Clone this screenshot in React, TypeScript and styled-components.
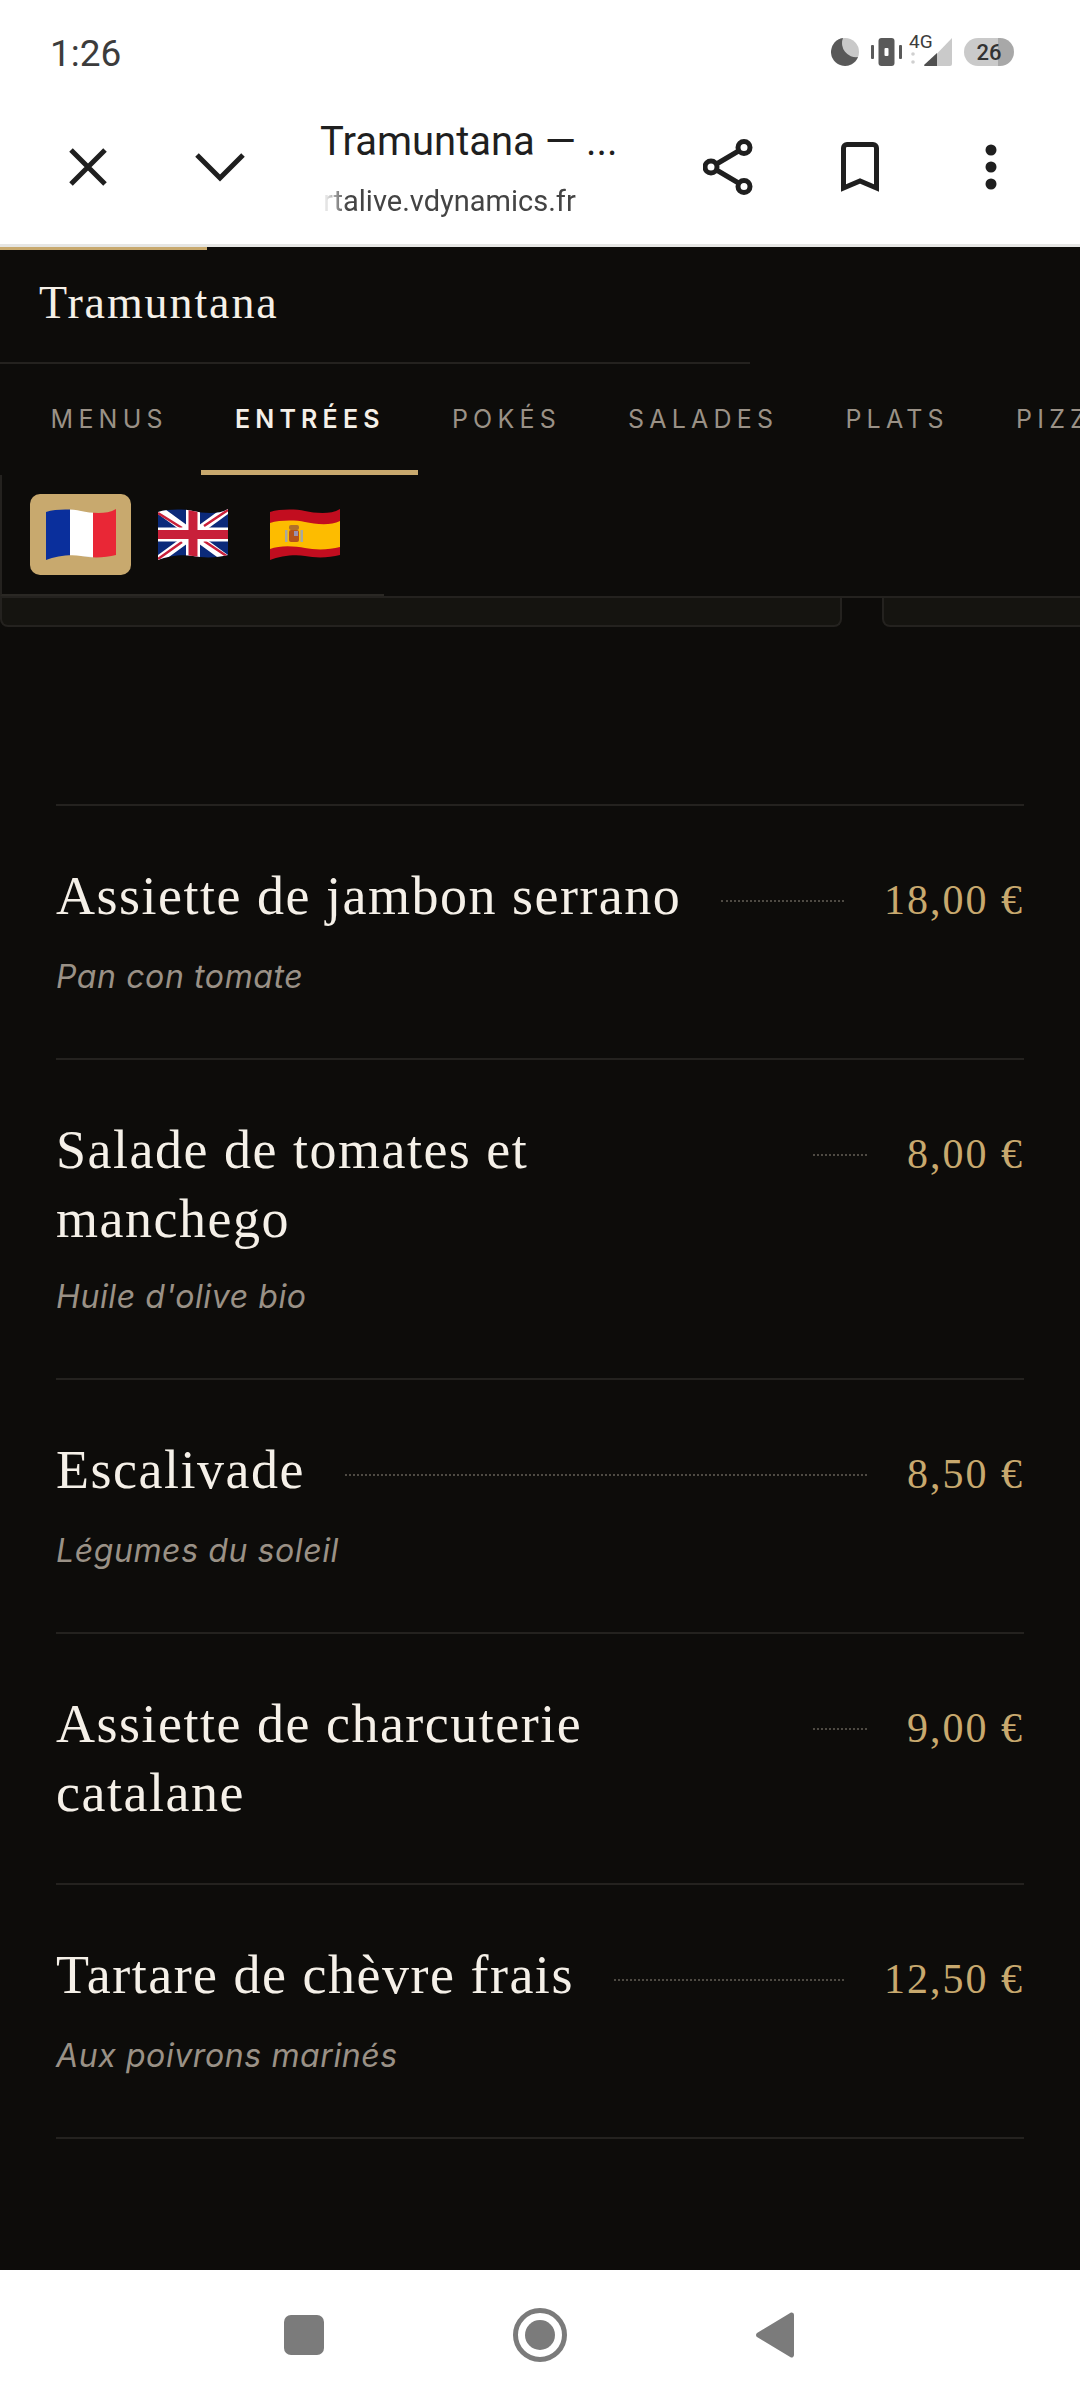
import styled, { createGlobalStyle } from "styled-components";

const GlobalStyle = createGlobalStyle`
  html, body {
    margin: 0;
    padding: 0;
    width: 1080px;
    height: 2400px;
    overflow: hidden;
    background: #ffffff;
  }
  * {
    box-sizing: border-box;
  }
`;

const tabs = ["MENUS", "ENTRÉES", "POKÉS", "SALADES", "PLATS", "PIZZAS"];

const dishes = [
  { name: "Assiette de jambon serrano", price: "18,00 €", note: "Pan con tomate" },
  { name: "Salade de tomates et manchego", price: "8,00 €", note: "Huile d'olive bio" },
  { name: "Escalivade", price: "8,50 €", note: "Légumes du soleil" },
  { name: "Assiette de charcuterie catalane", price: "9,00 €" },
  { name: "Tartare de chèvre frais", price: "12,50 €", note: "Aux poivrons marinés" },
];

const wave = "M0 3C10 0 25 0 35 2s25 4 35-2v46c-11 3-25 3-35 1S10 47 0 51Z";

const FlagFrance = () => (
  <FlagSvg viewBox="0 0 70 51">
    <defs>
      <clipPath id="wave-fr">
        <path d={wave} />
      </clipPath>
    </defs>
    <g clipPath="url(#wave-fr)">
      <rect width="24" height="51" fill="#0a2f9c" />
      <rect x="24" width="23" height="51" fill="#ffffff" />
      <rect x="47" width="23" height="51" fill="#e92736" />
      <path d="M24 47c8 0 15 1 23 1v3H24ZM24 0c8 0 15 3 23 3V0Z" fill="#bdbdbd" />
    </g>
  </FlagSvg>
);

const FlagUk = () => (
  <FlagSvg viewBox="0 0 70 51">
    <defs>
      <clipPath id="wave-uk">
        <path d={wave} />
      </clipPath>
    </defs>
    <g clipPath="url(#wave-uk)">
      <rect width="70" height="51" fill="#0b2a7a" />
      <path d="M0 0 70 51M70 0 0 51" stroke="#ffffff" strokeWidth="8" />
      <path d="M0 4 24 19M70 1 46 17M0 50 24 33M70 48 46 32" stroke="#c8203a" strokeWidth="2.500" />
      <path d="M35 0v51M0 25.500h70" stroke="#ffffff" strokeWidth="14" />
      <path d="M35 0v51M0 25.500h70" stroke="#c8203a" strokeWidth="9" />
    </g>
  </FlagSvg>
);

const FlagSpain = () => (
  <FlagSvg viewBox="0 0 70 51">
    <defs>
      <clipPath id="wave-es">
        <path d={wave} />
      </clipPath>
    </defs>
    <g clipPath="url(#wave-es)">
      <rect width="70" height="51" fill="#c20d1f" />
      <path d="M0 14C10 11 25 11 35 13s25 4 35-1v26c-11 3-25 3-35 1S10 36 0 40Z" fill="#fdbc00" />
      <rect x="19" y="21" width="10" height="12" rx="2" fill="#b5521b" />
      <rect x="24" y="22" width="4" height="5" fill="#9a8fb0" />
      <rect x="19" y="16" width="10" height="5" rx="2" fill="#b0702a" />
      <rect x="15" y="21" width="2.500" height="12" fill="#a8a8a0" />
      <rect x="30.500" y="21" width="2.500" height="12" fill="#a8a8a0" />
    </g>
  </FlagSvg>
);

const App = () => {
  return (
    <>
      <GlobalStyle />
      <Screen>
        <StatusBar>
          <Clock>1:26</Clock>
          <StatusIcons>
            <svg width="28" height="28" viewBox="0 0 28 28">
              <circle cx="14" cy="14" r="14" fill="#c9c9c9" />
              <path d="M12 0A14 14 0 1 0 27 19 14 14 0 0 1 12 0Z" fill="#595959" />
            </svg>
            <svg width="31" height="28" viewBox="0 0 31 28">
              <rect y="7" width="3" height="14" rx="1" fill="#595959" />
              <rect x="28" y="7" width="3" height="14" rx="1" fill="#595959" />
              <rect x="7.500" width="16" height="28" rx="3" fill="#595959" />
              <rect x="13.500" y="10" width="4" height="8" rx="1" fill="#ffffff" />
            </svg>
            <NetworkGroup>
              <NetworkType>4G</NetworkType>
              <svg width="43" height="31" viewBox="0 0 43 31">
                <circle cx="4" cy="19" r="1.800" fill="#d0d0d0" />
                <circle cx="4" cy="27" r="1.800" fill="#d0d0d0" />
                <path d="M43 3v26a2 2 0 0 1-2 2H16Z" fill="#cacaca" />
                <path d="M28 18v13H16a1 1 0 0 1-1-1Z" fill="#4f4f4f" />
              </svg>
            </NetworkGroup>
            <Battery>
              <BatteryLevel>26</BatteryLevel>
            </Battery>
          </StatusIcons>
        </StatusBar>

        <Toolbar>
          <ToolbarIcon $width={38}>
            <svg width="38" height="38" viewBox="0 0 38 38" fill="none" stroke="#1f1f1f" strokeWidth="5">
              <path d="M2 2 36 36M36 2 2 36" />
            </svg>
          </ToolbarIcon>
          <ToolbarIcon $width={50} $gap={88}>
            <svg width="50" height="29" viewBox="0 0 50 29" fill="none" stroke="#1f1f1f" strokeWidth="5">
              <path d="M2 2 25 25 48 2" />
            </svg>
          </ToolbarIcon>
          <PageTitle>
            <TitleText>Tramuntana — ...</TitleText>
            <UrlText>rtalive.vdynamics.fr</UrlText>
          </PageTitle>
          <ToolbarIcon $width={50}>
            <svg width="50" height="56" viewBox="0 0 50 56" fill="none" stroke="#1f1f1f" strokeWidth="5">
              <circle cx="8" cy="28" r="6" />
              <circle cx="41" cy="8.500" r="6" />
              <circle cx="41" cy="47.500" r="6" />
              <path d="M13.500 25 35.500 12M13.500 31 35.500 44" />
            </svg>
          </ToolbarIcon>
          <ToolbarIcon $width={38} $gap={88}>
            <svg width="38" height="50" viewBox="0 0 38 50" fill="none" stroke="#1f1f1f" strokeWidth="5">
              <path d="M2.500 46V6a3.500 3.500 0 0 1 3.500-3.500h26A3.500 3.500 0 0 1 35.500 6v40L19 39Z" />
            </svg>
          </ToolbarIcon>
          <ToolbarIcon $width={14} $gap={105}>
            <svg width="14" height="46" viewBox="0 0 14 46" fill="#1f1f1f">
              <circle cx="7" cy="6" r="5.500" />
              <circle cx="7" cy="23" r="5.500" />
              <circle cx="7" cy="40" r="5.500" />
            </svg>
          </ToolbarIcon>
        </Toolbar>

        <Page>
          <Progress />
          <SiteHeader>
            <Brand>Tramuntana</Brand>
          </SiteHeader>
          <TabBar>
            {tabs.map((tab) => (
              <Tab key={tab} $active={tab === "ENTRÉES"}>
                {tab}
              </Tab>
            ))}
          </TabBar>
          <LangBar>
            <LangButton $active>
              <FlagFrance />
            </LangButton>
            <LangButton>
              <FlagUk />
            </LangButton>
            <LangButton>
              <FlagSpain />
            </LangButton>
          </LangBar>
          <CardStrip>
            <PeekCard $width={842} />
            <PeekCard $width={300} />
          </CardStrip>
          <DishList>
            {dishes.map((dish) => (
              <Dish key={dish.name}>
                <DishRow>
                  <DishName>{dish.name}</DishName>
                  <Leader />
                  <Price>{dish.price}</Price>
                </DishRow>
                {dish.note && <DishNote>{dish.note}</DishNote>}
              </Dish>
            ))}
          </DishList>
        </Page>

        <NavBar>
          <svg width="40" height="40" viewBox="0 0 40 40">
            <rect width="40" height="40" rx="7" fill="#7b7b7b" />
          </svg>
          <svg width="54" height="54" viewBox="0 0 54 54">
            <circle cx="27" cy="27" r="24.500" fill="none" stroke="#7b7b7b" strokeWidth="5" />
            <circle cx="27" cy="27" r="15" fill="#7b7b7b" />
          </svg>
          <svg width="38" height="46" viewBox="0 0 38 46">
            <path d="M35 0.500a2.500 2.500 0 0 1 3 2.500v40a2.500 2.500 0 0 1-3 2.500L1 25a2.500 2.500 0 0 1 0-4Z" fill="#7b7b7b" />
          </svg>
        </NavBar>
      </Screen>
    </>
  );
};

const Screen = styled.div`
  display: flex;
  flex-direction: column;
  width: 1080px;
  height: 2400px;
  overflow: hidden;
  font-family: "Roboto", "Liberation Sans", sans-serif;
`;

const StatusBar = styled.div`
  display: flex;
  align-items: center;
  justify-content: space-between;
  flex: none;
  height: 104px;
  padding: 0 66px 0 50px;
`;

const Clock = styled.div`
  margin-top: 2px;
  font-size: 37px;
  color: #3c3c3c;
`;

const StatusIcons = styled.div`
  display: flex;
  align-items: center;
  gap: 12px;
`;

const NetworkGroup = styled.div`
  position: relative;
  width: 43px;
  height: 31px;
  margin: -3px 0 0 -5px;
`;

const NetworkType = styled.span`
  position: absolute;
  left: 0;
  top: -3px;
  font-size: 19px;
  line-height: 19px;
  color: #3c3c3c;
`;

const Battery = styled.div`
  display: flex;
  align-items: center;
  justify-content: center;
  width: 50px;
  height: 28px;
  border-radius: 14px;
  background: linear-gradient(90deg, #cacaca 0 68%, #a8a8a8 68% 100%);
`;

const BatteryLevel = styled.span`
  font-size: 22px;
  font-weight: 500;
  color: #333333;
`;

const Toolbar = styled.div`
  display: flex;
  align-items: center;
  flex: none;
  height: 140px;
  padding: 0 0 0 69px;
`;

const ToolbarIcon = styled.div<{ $width: number; $gap?: number }>`
  display: flex;
  justify-content: center;
  flex: none;
  width: ${(p) => p.$width}px;
  margin-left: ${(p) => p.$gap ?? 0}px;
  margin-bottom: 14px;
`;

const PageTitle = styled.div`
  display: flex;
  flex-direction: column;
  flex: none;
  width: 383px;
  margin-left: 75px;
  margin-bottom: 11px;
  gap: 17px;
`;

const TitleText = styled.div`
  font-size: 40px;
  line-height: 48px;
  color: #1f1f1f;
`;

const UrlText = styled.div`
  width: 260px;
  margin-left: 3px;
  font-size: 29px;
  line-height: 36px;
  color: #444444;
  mask-image: linear-gradient(90deg, transparent 0, #000 24px);
`;

const Page = styled.div`
  position: relative;
  display: flex;
  flex-direction: column;
  flex: 1;
  min-height: 0;
  overflow: hidden;
  background: #0d0c0a;
  border-top: 3px solid #e6e6e4;
`;

const Progress = styled.div`
  position: absolute;
  left: 0;
  top: 0;
  width: 207px;
  height: 3px;
  background: #c8a96e;
`;

const SiteHeader = styled.div`
  display: flex;
  align-items: center;
  flex: none;
  width: 750px;
  height: 117px;
  padding: 0 0 5px 39px;
  border-bottom: 2px solid #24221f;
`;

const Brand = styled.div`
  font-family: "Liberation Serif", serif;
  font-size: 46px;
  letter-spacing: 1.900px;
  color: #f5f0e8;
`;

const TabBar = styled.div`
  display: flex;
  flex: none;
  height: 111px;
  padding: 0 0 0 17px;
  overflow: hidden;
`;

const Tab = styled.div<{ $active?: boolean }>`
  display: flex;
  align-items: center;
  flex: none;
  height: 111px;
  padding: 4px 33.600px 0;
  font-size: 25px;
  font-family: "Inter", sans-serif;
  font-weight: ${(p) => (p.$active ? 600 : 400)};
  letter-spacing: 5.200px;
  color: ${(p) => (p.$active ? "#f5f0e8" : "#9a9186")};
  border-bottom: 5px solid ${(p) => (p.$active ? "#c8a96e" : "transparent")};
`;

const LangBar = styled.div`
  display: flex;
  align-items: flex-start;
  flex: none;
  gap: 11px;
  width: 384px;
  height: 121px;
  padding: 19px 0 0 28px;
  border-left: 2px solid #24221f;
  border-bottom: 2px solid #2a2824;
`;

const LangButton = styled.div<{ $active?: boolean }>`
  display: flex;
  align-items: center;
  justify-content: center;
  flex: none;
  width: 101px;
  height: 81px;
  border-radius: 10px;
  background: ${(p) => (p.$active ? "#c8a96e" : "transparent")};
`;

const FlagSvg = styled.svg`
  display: block;
  width: 70px;
  height: 51px;
`;

const CardStrip = styled.div`
  display: flex;
  flex: none;
  gap: 40px;
  overflow: hidden;
  border-top: 2px solid #24221f;
`;

const PeekCard = styled.div<{ $width: number }>`
  flex: none;
  width: ${(p) => p.$width}px;
  height: 29px;
  background: #151410;
  border: 2px solid #24221f;
  border-top: none;
  border-radius: 0 0 8px 8px;
`;

const DishList = styled.div`
  display: flex;
  flex-direction: column;
  margin: 177px 56px 0;
  border-top: 2px solid #24221f;
`;

const Dish = styled.div`
  padding: 56px 0 55px;
  border-bottom: 2px solid #24221f;
`;

const DishRow = styled.div`
  display: flex;
  align-items: flex-start;
  gap: 40px;
  min-height: 72px;
`;

const DishName = styled.div`
  flex: 0 1 auto;
  font-family: "Liberation Serif", serif;
  font-size: 54px;
  letter-spacing: 1.500px;
  line-height: 69px;
  color: #f5f0e8;
`;

const Leader = styled.div`
  flex: 1 1 0;
  min-width: 54px;
  margin-top: 38px;
  border-top: 2px dotted #4e4a43;
`;

const Price = styled.div`
  flex: none;
  margin-top: 8px;
  font-family: "Liberation Serif", serif;
  font-size: 42px;
  letter-spacing: 2px;
  line-height: 61px;
  color: #c8a96e;
`;

const DishNote = styled.div`
  margin-top: 17px;
  font-family: "Inter", sans-serif;
  font-size: 32px;
  font-style: italic;
  letter-spacing: 0.600px;
  line-height: 52px;
  color: #9a9186;
`;

const NavBar = styled.div`
  display: flex;
  align-items: center;
  flex: none;
  justify-content: center;
  gap: 189px;
  height: 130px;
  padding-right: 2px;
  background: #ffffff;
`;

export default App;
